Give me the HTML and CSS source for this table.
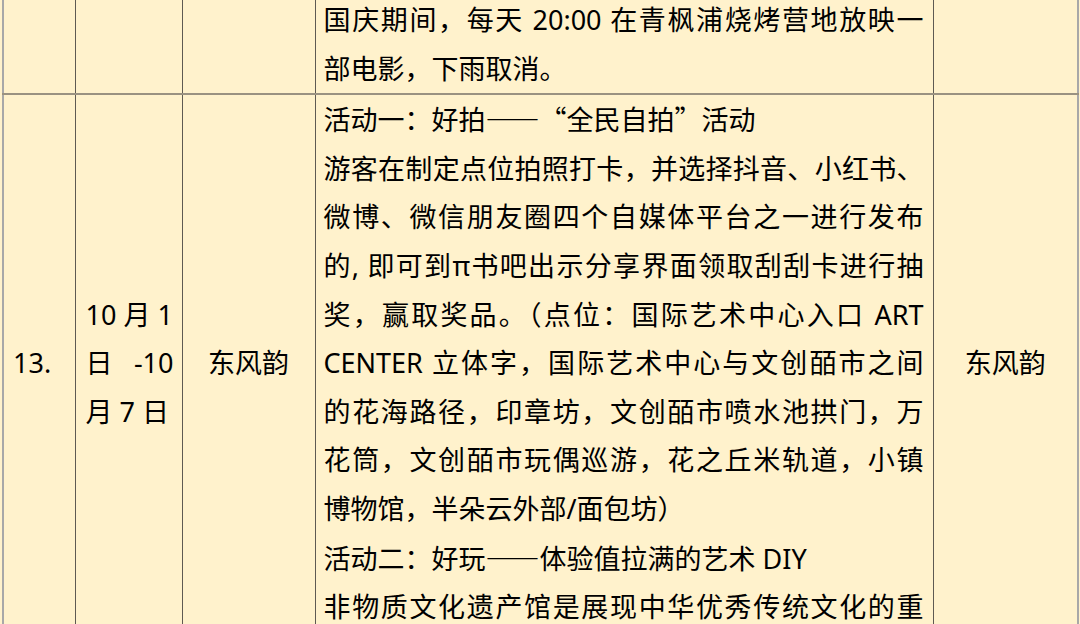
FILE: index.html
```html
<!DOCTYPE html>
<html lang="zh-CN">
<head>
<meta charset="utf-8">
<link rel="stylesheet" href="styles.css">
</head>
<body>
<table class="sheet">
  <colgroup>
    <col class="c-no">
    <col class="c-date">
    <col class="c-place">
    <col class="c-desc">
    <col class="c-owner">
  </colgroup>
  <tbody>
    <tr class="row-prev">
      <td class="no"></td>
      <td class="date"></td>
      <td class="place"></td>
      <td class="desc">
        <div class="ln j">国庆期间，每天 20:00 在青枫浦烧烤营地放映一</div>
        <div class="ln">部电影，下雨取消。</div>
      </td>
      <td class="owner"></td>
    </tr>
    <tr class="row-main">
      <td class="no">13.</td>
      <td class="date">
        <div class="ln">10 月 1</div>
        <div class="ln j">日 &nbsp;-10</div>
        <div class="ln">月 7 日</div>
      </td>
      <td class="place">东风韵</td>
      <td class="desc">
        <div class="ln">活动一：好拍<span class="cjk">——“全民自拍”</span>活动</div>
        <div class="ln j">游客在制定点位拍照打卡，并选择抖音、小红书、</div>
        <div class="ln j">微博、微信朋友圈四个自媒体平台之一进行发布</div>
        <div class="ln j">的, 即可到π书吧出示分享界面领取刮刮卡进行抽</div>
        <div class="ln j">奖，赢取奖品。（点位：国际艺术中心入口 ART</div>
        <div class="ln j">CENTER 立体字，国际艺术中心与文创皕市之间</div>
        <div class="ln j">的花海路径，印章坊，文创皕市喷水池拱门，万</div>
        <div class="ln j">花筒，文创皕市玩偶巡游，花之丘米轨道，小镇</div>
        <div class="ln">博物馆，半朵云外部/面包坊）</div>
        <div class="ln">活动二：好玩<span class="cjk">——</span>体验值拉满的艺术 DIY</div>
        <div class="ln j">非物质文化遗产馆是展现中华优秀传统文化的重</div>
      </td>
      <td class="owner">东风韵</td>
    </tr>
  </tbody>
</table>
</body>
</html>
```

FILE: styles.css
```css
html, body {
  margin: 0;
  padding: 0;
  overflow: hidden;
  background: #fff2cc;
}

body {
  width: 1080px;
  height: 624px;
  font-family: "Noto Sans", "Noto Sans CJK SC", sans-serif;
  font-size: 27px;
  line-height: 48.6px;
  color: #000;
}

.cjk {
  font-family: "Noto Sans CJK SC", sans-serif;
}

.sheet {
  margin: -6px 0 0 2px;
  border-collapse: collapse;
  table-layout: fixed;
  width: 1075px;
  background: #fff2cc;
}

.c-no { width: 72px; }
.c-date { width: 107px; }
.c-place { width: 133px; }
.c-desc { width: 618px; }
.c-owner { width: 145px; }

.sheet td {
  border-left: 1px solid #5e5a52;
  border-right: 1px solid #5e5a52;
  border-top: 2px solid #9a9281;
  border-bottom: 2px solid #9a9281;
  padding: 0;
  vertical-align: middle;
}

.sheet td:first-child {
  border-left: 2px solid #a8a8a8;
}

.sheet td:last-child {
  border-right: 2px solid #a8a8a8;
}

.no {
  padding-left: 9px !important;
}

.date {
  padding: 0 8px 0 10px !important;
}

.place,
.owner {
  text-align: center;
}

.desc {
  padding: 0 9px 0 8px !important;
}

.ln {
  white-space: nowrap;
}

.ln.j {
  text-align: justify;
  text-align-last: justify;
}
```
